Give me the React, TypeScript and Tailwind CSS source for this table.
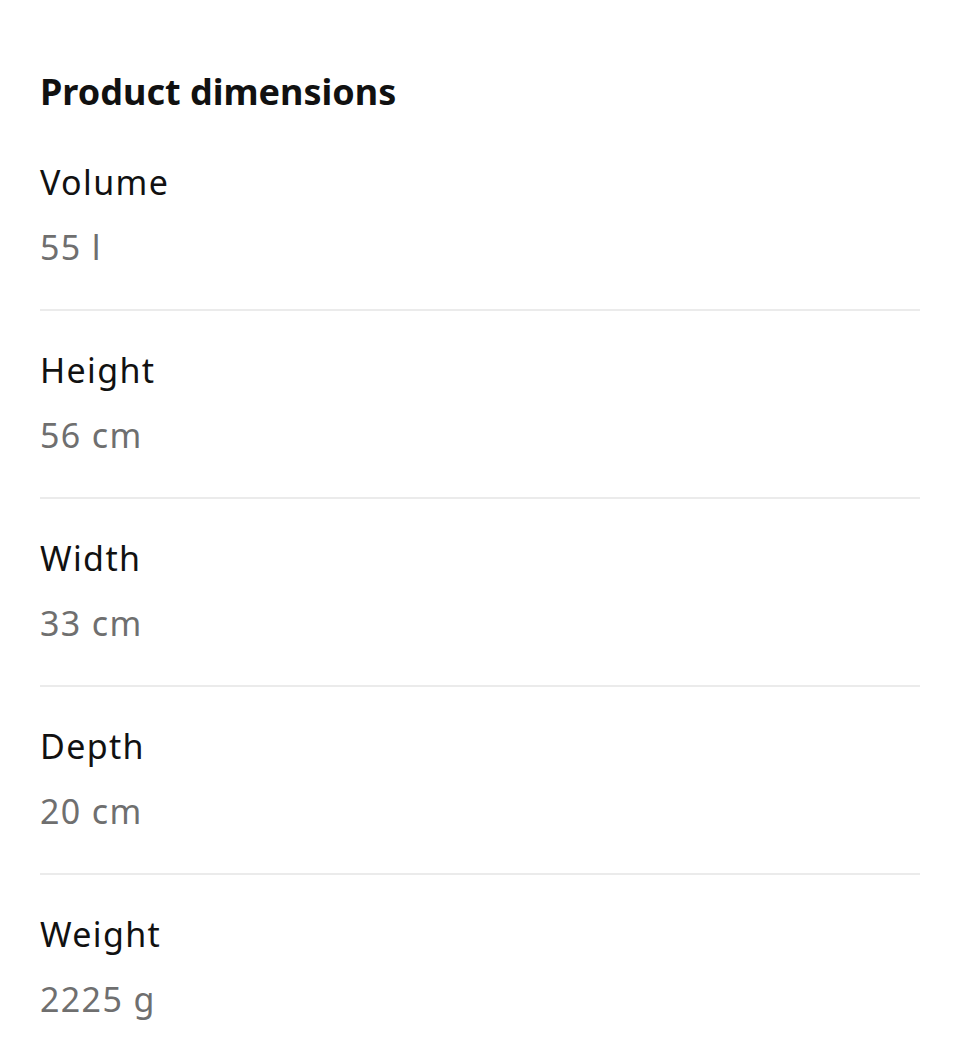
import React from 'react';

const rows = [
  { label: 'Volume', value: '55 l' },
  { label: 'Height', value: '56 cm' },
  { label: 'Width', value: '33 cm' },
  { label: 'Depth', value: '20 cm' },
  { label: 'Weight', value: '2225 g' },
];

export default function App() {
  return (
    <div className="min-h-screen bg-white px-10 pt-[68px] font-['Noto_Sans',sans-serif] text-[#111111]">
      <h2 className="text-[36px] font-bold leading-[48px]">Product dimensions</h2>

      <div className="mt-[44px]">
        {rows.map((row, i) => (
          <div
            key={row.label}
            className={
              i === 0
                ? 'pb-[40px] border-b-2 border-[#ebebeb]'
                : i === rows.length - 1
                ? 'pt-[37px]'
                : 'pt-[37px] pb-[40px] border-b-2 border-[#ebebeb]'
            }
          >
            <div className="text-[34px] leading-[44px] tracking-[0.04em]">{row.label}</div>
            <div className="mt-[21px] text-[34px] leading-[44px] tracking-[0.04em] text-[#6f6f6f]">{row.value}</div>
          </div>
        ))}
      </div>
    </div>
  );
}
